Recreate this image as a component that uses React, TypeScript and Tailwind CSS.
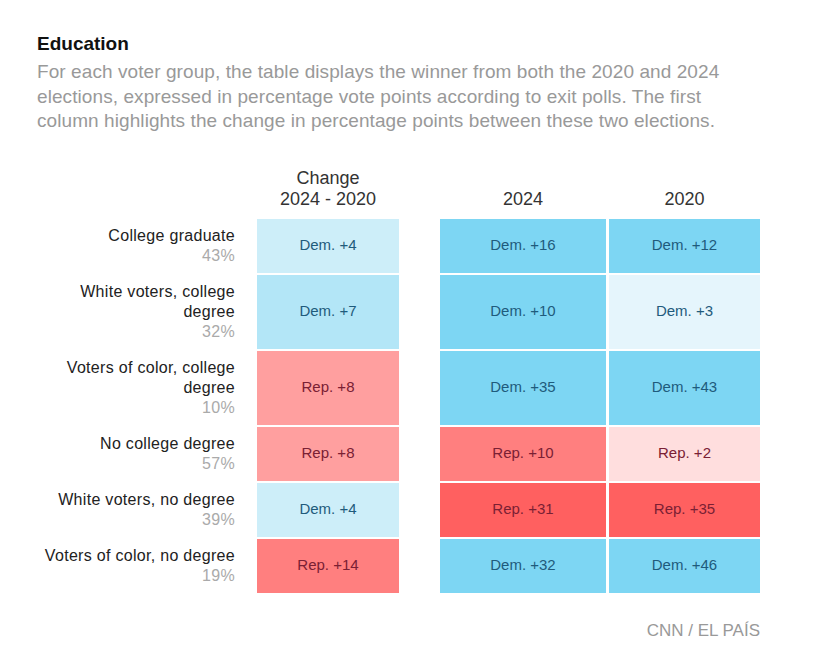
const FONT = "font-['Liberation_Sans',Arial,sans-serif]"

type Cell = { label: string; tone: string }

interface Row {
  group: string
  share: string
  change: Cell
  y2024: Cell
  y2020: Cell
}

const tones: Record<string, string> = {
  dem1: 'bg-[#e5f5fc] text-[#1f5b7c]',
  dem2: 'bg-[#cdeef9] text-[#1f5b7c]',
  dem3: 'bg-[#b3e6f7] text-[#1f5b7c]',
  dem4: 'bg-[#7dd6f3] text-[#1f5b7c]',
  rep1: 'bg-[#ffdede] text-[#7a2034]',
  rep2: 'bg-[#ff9f9f] text-[#7a2034]',
  rep3: 'bg-[#ff7f7f] text-[#7a2034]',
  rep4: 'bg-[#ff6060] text-[#7a2034]',
}

const rows: Row[] = [
  {
    group: 'College graduate',
    share: '43%',
    change: { label: 'Dem. +4', tone: 'dem2' },
    y2024: { label: 'Dem. +16', tone: 'dem4' },
    y2020: { label: 'Dem. +12', tone: 'dem4' },
  },
  {
    group: 'White voters, college degree',
    share: '32%',
    change: { label: 'Dem. +7', tone: 'dem3' },
    y2024: { label: 'Dem. +10', tone: 'dem4' },
    y2020: { label: 'Dem. +3', tone: 'dem1' },
  },
  {
    group: 'Voters of color, college degree',
    share: '10%',
    change: { label: 'Rep. +8', tone: 'rep2' },
    y2024: { label: 'Dem. +35', tone: 'dem4' },
    y2020: { label: 'Dem. +43', tone: 'dem4' },
  },
  {
    group: 'No college degree',
    share: '57%',
    change: { label: 'Rep. +8', tone: 'rep2' },
    y2024: { label: 'Rep. +10', tone: 'rep3' },
    y2020: { label: 'Rep. +2', tone: 'rep1' },
  },
  {
    group: 'White voters, no degree',
    share: '39%',
    change: { label: 'Dem. +4', tone: 'dem2' },
    y2024: { label: 'Rep. +31', tone: 'rep4' },
    y2020: { label: 'Rep. +35', tone: 'rep4' },
  },
  {
    group: 'Voters of color, no degree',
    share: '19%',
    change: { label: 'Rep. +14', tone: 'rep3' },
    y2024: { label: 'Dem. +32', tone: 'dem4' },
    y2020: { label: 'Dem. +46', tone: 'dem4' },
  },
]

function ValueCell({ cell }: { cell: Cell }) {
  return (
    <div className={`flex items-center justify-center text-[15px] ${tones[cell.tone]}`}>
      {cell.label}
    </div>
  )
}

export default function App() {
  return (
    <div className={`min-h-[661px] bg-white pl-[37px] pt-[33px] ${FONT}`}>
      <h2 className="text-[19px] leading-[22px] font-bold text-[#111]">Education</h2>
      <p className="mt-[5px] w-[700px] text-[19px] leading-[24.5px] tracking-[0.08px] text-[#999]">
        For each voter group, the table displays the winner from both the 2020 and 2024
        elections, expressed in percentage vote points according to exit polls. The first
        column highlights the change in percentage points between these two elections.
      </p>

      <div className="mt-[34px] grid grid-cols-[217px_142px_35px_166px_151px] gap-x-[3px] gap-y-[2px]">
        <div />
        <div className="flex flex-col items-center justify-end pb-[7px] text-[18px] leading-[21px] text-[#333]">
          <span>Change</span>
          <span>2024 - 2020</span>
        </div>
        <div />
        <div className="flex items-end justify-center pb-[7px] text-[18px] leading-[21px] text-[#333]">
          2024
        </div>
        <div className="flex items-end justify-center pb-[7px] text-[18px] leading-[21px] text-[#333]">
          2020
        </div>

        {rows.map((row) => (
          <div key={row.group} className="contents">
            <div className="py-[7px] pr-[19px] text-right text-[16px] leading-[20px] tracking-[0.3px]">
              <div className="text-[#222]">{row.group}</div>
              <div className="text-[#aaa]">{row.share}</div>
            </div>
            <ValueCell cell={row.change} />
            <div />
            <ValueCell cell={row.y2024} />
            <ValueCell cell={row.y2020} />
          </div>
        ))}
      </div>

      <div className="mt-[28px] w-[723px] text-right text-[17px] leading-[20px] text-[#999]">
        CNN / EL PAÍS
      </div>
    </div>
  )
}
